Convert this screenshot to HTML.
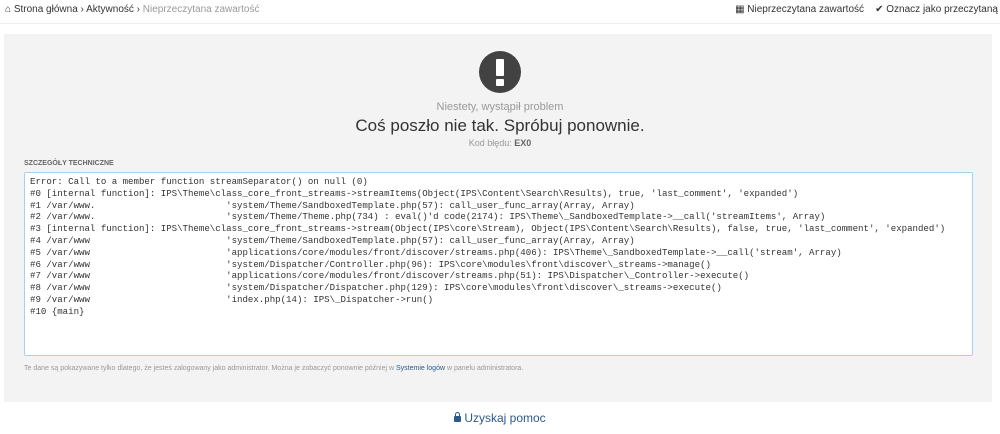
<!DOCTYPE html>
<html><head><meta charset="utf-8"><style>
body{margin:0;width:1000px;height:434px;background:#fff;font-family:"Liberation Sans",sans-serif;position:relative;overflow:hidden}
.bc{position:absolute;top:4px;left:5px;font-size:10px;color:#333}
.bc .g{color:#999}
.tr{position:absolute;top:4px;right:2px;font-size:10px;color:#333;white-space:nowrap}
.line{position:absolute;top:23px;left:0;width:1000px;height:1px;background:#eee}
.panel{position:absolute;left:4px;top:34px;width:988px;height:368px;background:#f3f3f3}
.icon{position:absolute;left:479px;top:51px;width:42px;height:42px;border-radius:50%;background:#424242}
.icon:before{content:"";position:absolute;left:17px;top:8px;width:8px;height:17px;background:#fff;border-radius:1px}
.icon:after{content:"";position:absolute;left:17px;top:28px;width:8px;height:7px;background:#fff;border-radius:1px}
.c{position:absolute;left:0;width:1000px;text-align:center}
.ta{position:absolute;left:24px;top:172px;width:937px;height:176px;background:#fff;border:1px solid #a7d0ef;border-radius:2px;padding:3px 5px;font-family:"Liberation Mono",monospace;font-size:9.09px;line-height:11.8px;color:#333;white-space:pre;overflow:hidden}
.lock{display:inline-block;position:relative;width:7px;height:6px;background:#2c5a8a;border-radius:1px;margin-right:3px;vertical-align:0px}
.lock:before{content:"";position:absolute;left:1px;top:-4px;width:3px;height:4px;border:1px solid #2c5a8a;border-bottom:0;border-radius:3px 3px 0 0}
</style></head><body>
<div class="bc">&#8962; Strona główna › Aktywność › <span class="g">Nieprzeczytana zawartość</span></div>
<div class="tr">▦ Nieprzeczytana zawartość &nbsp;&nbsp;&nbsp;✔ Oznacz jako przeczytaną</div>
<div class="line"></div>
<div class="panel"></div>
<div class="icon"></div>
<div class="c" style="top:101px;font-size:11px;color:#999">Niestety, wystąpił problem</div>
<div class="c" style="top:116px;font-size:17px;color:#333">Coś poszło nie tak. Spróbuj ponownie.</div>
<div class="c" style="top:138px;font-size:9px;color:#999">Kod błędu: <b style="color:#666">EX0</b></div>
<div style="position:absolute;left:24px;top:160px;font-size:7px;font-weight:bold;color:#666">SZCZEGÓŁY TECHNICZNE</div>
<div class="ta">Error: Call to a member function streamSeparator() on null (0)
#0 [internal function]: IPS\Theme\class_core_front_streams->streamItems(Object(IPS\Content\Search\Results), true, 'last_comment', 'expanded')
#1 /var/www.                        'system/Theme/SandboxedTemplate.php(57): call_user_func_array(Array, Array)
#2 /var/www.                        'system/Theme/Theme.php(734) : eval()'d code(2174): IPS\Theme\_SandboxedTemplate->__call('streamItems', Array)
#3 [internal function]: IPS\Theme\class_core_front_streams->stream(Object(IPS\core\Stream), Object(IPS\Content\Search\Results), false, true, 'last_comment', 'expanded')
#4 /var/www                         'system/Theme/SandboxedTemplate.php(57): call_user_func_array(Array, Array)
#5 /var/www                         'applications/core/modules/front/discover/streams.php(406): IPS\Theme\_SandboxedTemplate->__call('stream', Array)
#6 /var/www                         'system/Dispatcher/Controller.php(96): IPS\core\modules\front\discover\_streams->manage()
#7 /var/www                         'applications/core/modules/front/discover/streams.php(51): IPS\Dispatcher\_Controller->execute()
#8 /var/www                         'system/Dispatcher/Dispatcher.php(129): IPS\core\modules\front\discover\_streams->execute()
#9 /var/www                         'index.php(14): IPS\_Dispatcher->run()
#10 {main}</div>
<div style="position:absolute;left:24px;top:365px;font-size:7px;color:#999">Te dane są pokazywane tylko dlatego, że jesteś zalogowany jako administrator. Można je zobaczyć ponownie później w <span style="color:#2c5a8a">Systemie logów</span> w panelu administratora.</div>
<div class="c" style="top:411px;font-size:12px;color:#2c5a8a"><span class="lock"></span>Uzyskaj pomoc</div>
</body></html>
